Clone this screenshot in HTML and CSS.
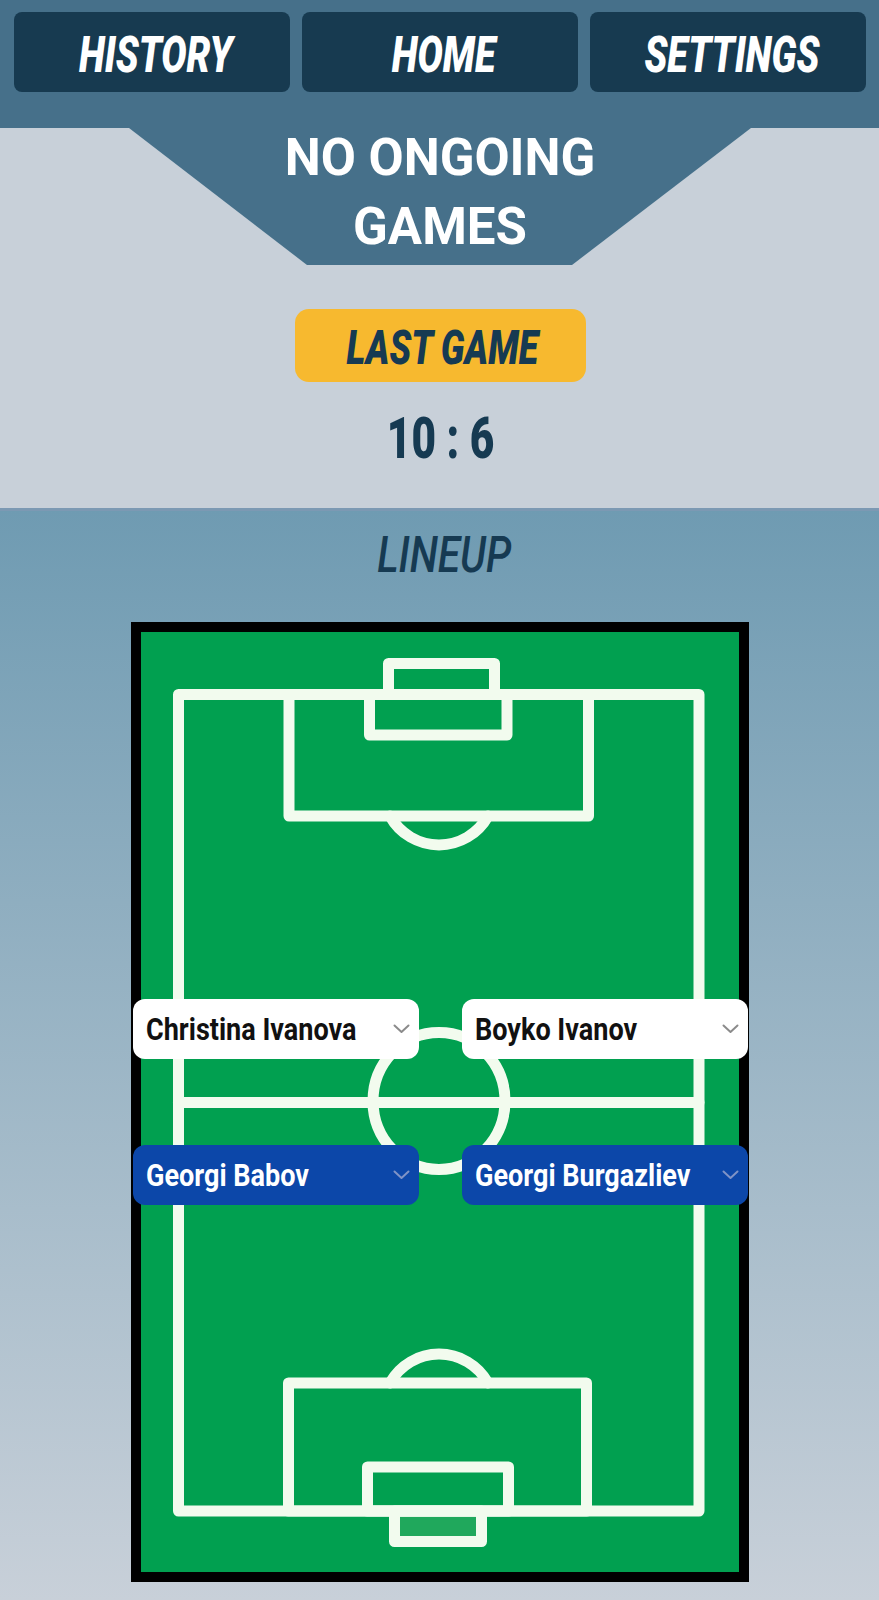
FILE: index.html
```html
<!DOCTYPE html>
<html lang="en">
<head>
<meta charset="utf-8">
<title>Lineup</title>
<link rel="stylesheet" href="styles.css">
</head>
<body>
<header class="topbar">
  <nav class="nav">
    <a class="nav-btn" href="#"><span class="cond">HISTORY</span></a>
    <a class="nav-btn" href="#"><span class="cond">HOME</span></a>
    <a class="nav-btn" href="#"><span class="cond">SETTINGS</span></a>
  </nav>
</header>

<section class="status">
  <div class="banner">
    <h1 class="banner-title">NO ONGOING<br>GAMES</h1>
  </div>
  <button class="last-game" type="button"><span class="cond">LAST GAME</span></button>
  <p class="score"><span class="cond">10 : 6</span></p>
</section>

<section class="lineup">
  <h2 class="lineup-title"><span class="cond">LINEUP</span></h2>
  <div class="pitch">
    <svg class="pitch-lines" width="598" height="940" viewBox="0 0 598 940">
      <rect class="goal-fill" x="253.5" y="879" width="87" height="30.5"/>
      <rect x="37.5" y="62.5" width="520.5" height="816.5"/>
      <rect x="247.5" y="31.5" width="106" height="31"/>
      <rect x="228.5" y="62.5" width="137.5" height="40.5"/>
      <rect x="148" y="62.5" width="299.5" height="121.5"/>
      <path d="M249 184 A56 56 0 0 0 347 184"/>
      <line x1="37.5" y1="470.5" x2="558" y2="470.5"/>
      <ellipse cx="298" cy="469" rx="66" ry="68.5"/>
      <path d="M249 751 A56 56 0 0 1 347 751"/>
      <rect x="147.5" y="751" width="298" height="128"/>
      <rect x="226.5" y="835" width="141" height="44"/>
      <rect x="253.5" y="879" width="87" height="30.5"/>
    </svg>
    <div class="slots">
      <div class="slot">
        <span class="slot-name"><span class="slot-text">Christina Ivanova</span></span>
        <svg class="chev" width="17" height="10" viewBox="0 0 17 10"><polyline points="1.5,1.5 8.5,8 15.5,1.5"/></svg>
      </div>
      <div class="slot">
        <span class="slot-name"><span class="slot-text">Boyko Ivanov</span></span>
        <svg class="chev" width="17" height="10" viewBox="0 0 17 10"><polyline points="1.5,1.5 8.5,8 15.5,1.5"/></svg>
      </div>
      <div class="slot slot-blue">
        <span class="slot-name"><span class="slot-text">Georgi Babov</span></span>
        <svg class="chev" width="17" height="10" viewBox="0 0 17 10"><polyline points="1.5,1.5 8.5,8 15.5,1.5"/></svg>
      </div>
      <div class="slot slot-blue">
        <span class="slot-name"><span class="slot-text">Georgi Burgazliev</span></span>
        <svg class="chev" width="17" height="10" viewBox="0 0 17 10"><polyline points="1.5,1.5 8.5,8 15.5,1.5"/></svg>
      </div>
    </div>
  </div>
</section>
</body>
</html>
```

FILE: styles.css
```css
* { box-sizing: border-box; }

html, body {
  margin: 0;
  padding: 0;
}

body {
  width: 879px;
  font-family: Roboto, "Liberation Sans", sans-serif;
  background: #c8d0d9;
}

/* condensed look: Roboto squeezed horizontally */
.cond {
  display: inline-block;
  font-family: Roboto, "Liberation Sans", sans-serif;
  transform: scaleX(0.755);
  white-space: nowrap;
}

/* ---------- top navigation ---------- */
.topbar {
  background: #46708a;
  height: 128px;
  padding: 12px 13px 0 14px;
}

.nav {
  display: grid;
  grid-template-columns: repeat(3, 1fr);
  gap: 12px;
}

.nav-btn {
  height: 80px;
  display: flex;
  align-items: center;
  justify-content: center;
  padding: 6px 0 0 7px;
  background: #173a50;
  border-radius: 8px;
  color: #ffffff;
  text-decoration: none;
  font-size: 50px;
  font-weight: 900;
  font-style: italic;
  line-height: 1;
}

/* ---------- status ---------- */
.status {
  background: #c8d0d9;
  height: 380px;
  display: flex;
  flex-direction: column;
  align-items: center;
}

.banner {
  width: 622px;
  height: 137px;
  margin-left: 1px;
  background: #46708a;
  clip-path: polygon(0 0, 100% 0, 443px 100%, 178px 100%);
}

.banner-title {
  margin: -5px 0 0;
  font-family: Roboto, "Liberation Sans", sans-serif;
  font-weight: 700;
  font-size: 51px;
  line-height: 69px;
  color: #ffffff;
  text-align: center;
}

.last-game {
  margin-top: 44px;
  margin-left: 2px;
  width: 291px;
  height: 73px;
  border: 0;
  border-radius: 14px;
  background: #f7b92f;
  color: #163a52;
  display: flex;
  align-items: center;
  justify-content: center;
  padding: 4px 0 0 4px;
  font-family: Roboto, "Liberation Sans", sans-serif;
  font-size: 48px;
  font-weight: 900;
  font-style: italic;
  line-height: 1;
}

.last-game .cond { transform: scaleX(0.746); }

.score {
  margin: 27px 0 0;
  padding-left: 2px;
  color: #163a52;
  font-size: 58px;
  font-weight: 900;
  line-height: 58px;
  text-align: center;
}

.score .cond { transform: scaleX(0.73); }

/* ---------- lineup ---------- */
.lineup {
  border-top: 3px solid #7c99b3;
  background: linear-gradient(180deg, #6f9bb2 0%, #c8d0d9 100%);
  padding: 19px 0 18px;
}

.lineup-title {
  margin: 0;
  padding-left: 10px;
  color: #163a52;
  font-size: 50px;
  font-weight: 500;
  font-style: italic;
  line-height: 50px;
  text-align: center;
}

.lineup-title .cond { transform: scaleX(0.815); }

.pitch {
  position: relative;
  width: 618px;
  height: 960px;
  margin: 42px 0 0 131px;
  border: 10px solid #000000;
  background: #01a050;
}

.pitch-lines {
  display: block;
  fill: none;
  stroke: #f2fbee;
  stroke-width: 11;
  stroke-linejoin: round;
  stroke-linecap: round;
}

.pitch-lines .goal-fill {
  fill: #20a85c;
  stroke: none;
}

.slots {
  position: absolute;
  left: -8px;
  top: 367px;
  display: grid;
  grid-template-columns: 286px 286px;
  column-gap: 43px;
  row-gap: 86px;
}

.slot {
  height: 60px;
  border-radius: 12px;
  background: #ffffff;
  color: #111111;
  display: flex;
  align-items: center;
  padding: 0 9px 0 13px;
}

.slot-name {
  flex: 1 1 auto;
  min-width: 0;
  display: flex;
  align-items: center;
}

.slot-text {
  display: inline-block;
  font-family: Roboto, "Liberation Sans", sans-serif;
  font-weight: 700;
  font-size: 32px;
  line-height: 1;
  white-space: nowrap;
  transform: scaleX(0.845);
  transform-origin: left center;
}

.chev {
  display: block;
  flex: 0 0 auto;
  fill: none;
  stroke: #8b8b8b;
  stroke-width: 2;
  stroke-linecap: round;
  stroke-linejoin: round;
}

.slot-blue {
  background: #0c47a9;
  color: #ffffff;
}

.slot-blue .chev {
  stroke: #7f93c6;
}
```
